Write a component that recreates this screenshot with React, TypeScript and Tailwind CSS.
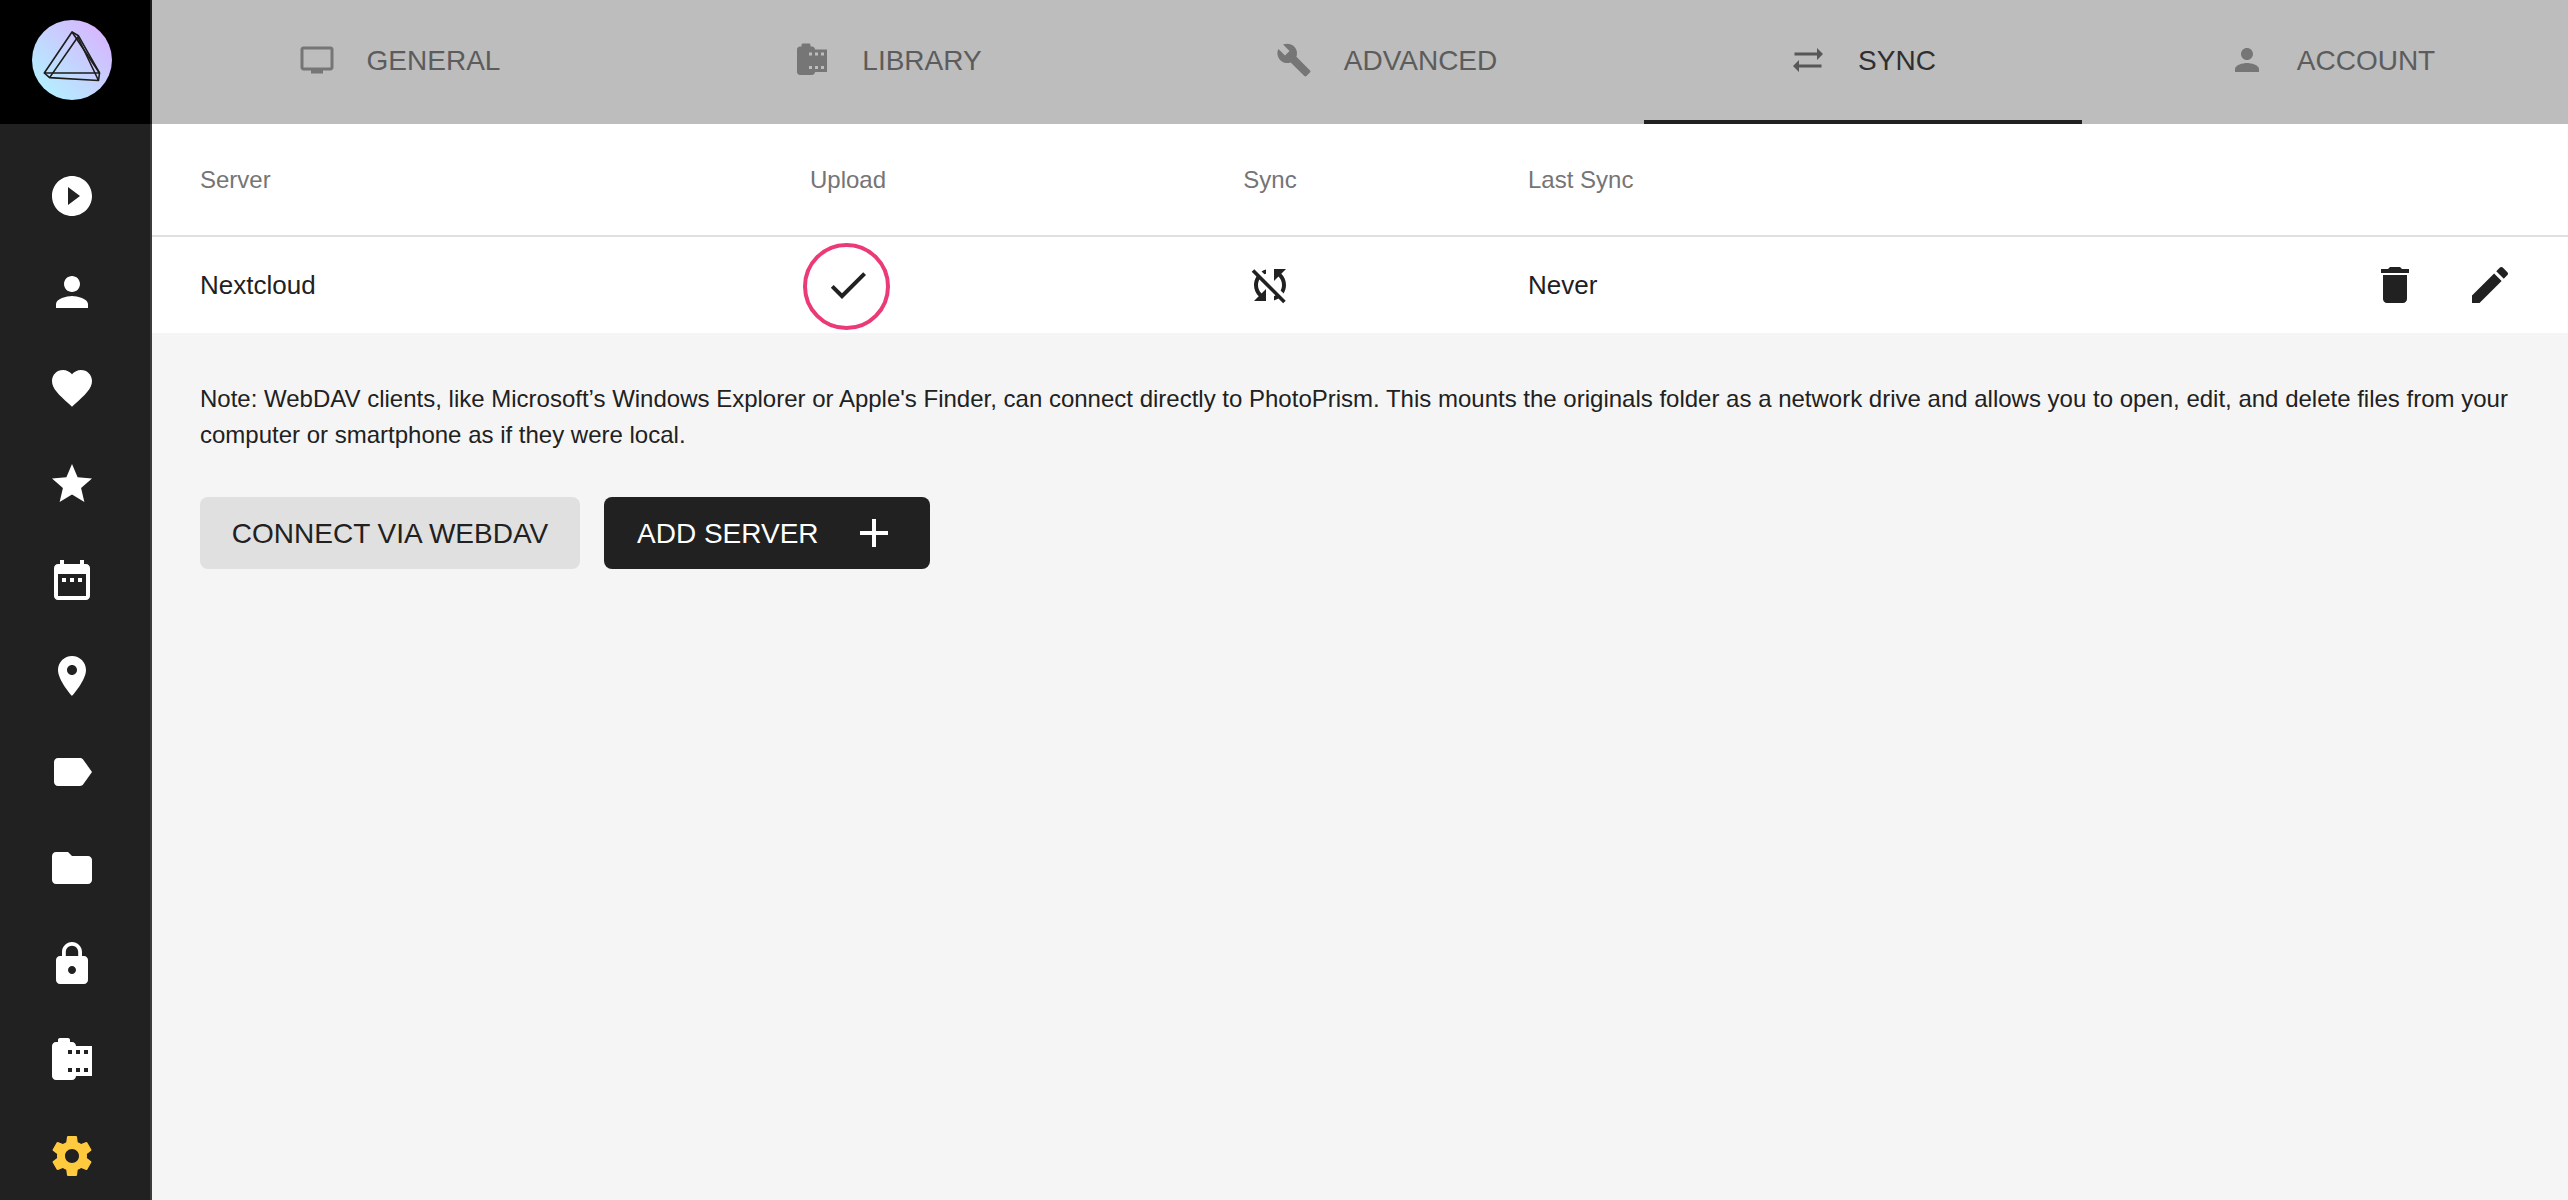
import type { ReactNode } from "react";

const paths = {
  play: "M12 2C6.48 2 2 6.48 2 12s4.48 10 10 10 10-4.48 10-10S17.52 2 12 2zm-2 14.5v-9l6 4.5-6 4.5z",
  person: "M12 12c2.21 0 4-1.79 4-4s-1.79-4-4-4-4 1.79-4 4 1.79 4 4 4zm0 2c-2.67 0-8 1.34-8 4v2h16v-2c0-2.66-5.33-4-8-4z",
  heart: "M12 21.35l-1.45-1.32C5.4 15.36 2 12.28 2 8.5 2 5.42 4.42 3 7.5 3c1.74 0 3.41.81 4.5 2.09C13.09 3.81 14.76 3 16.5 3 19.58 3 22 5.42 22 8.5c0 3.78-3.4 6.86-8.55 11.54L12 21.35z",
  star: "M12 17.27L18.18 21l-1.64-7.03L22 9.24l-7.19-.61L12 2 9.19 8.63 2 9.24l5.46 4.73L5.82 21z",
  calendar: "M9 11H7v2h2v-2zm4 0h-2v2h2v-2zm4 0h-2v2h2v-2zm2-7h-1V2h-2v2H8V2H6v2H5c-1.11 0-1.99.9-1.99 2L3 20c0 1.1.89 2 2 2h14c1.1 0 2-.9 2-2V6c0-1.1-.9-2-2-2zm0 16H5V9h14v11z",
  place: "M12 2C8.13 2 5 5.13 5 9c0 5.25 7 13 7 13s7-7.75 7-13c0-3.87-3.13-7-7-7zm0 9.5c-1.38 0-2.5-1.12-2.5-2.5s1.12-2.5 2.5-2.5 2.5 1.12 2.5 2.5-1.12 2.5-2.5 2.5z",
  label: "M17.63 5.84C17.27 5.33 16.67 5 16 5L5 5.01C3.9 5.01 3 5.9 3 7v10c0 1.1.9 1.99 2 1.99L16 19c.67 0 1.27-.33 1.63-.84L22 12l-4.37-6.16z",
  folder: "M10 4H4c-1.1 0-1.99.9-1.99 2L2 18c0 1.1.9 2 2 2h16c1.1 0 2-.9 2-2V8c0-1.1-.9-2-2-2h-8l-2-2z",
  lock: "M18 8h-1V6c0-2.76-2.24-5-5-5S7 3.24 7 6v2H6c-1.1 0-2 .9-2 2v10c0 1.1.9 2 2 2h12c1.1 0 2-.9 2-2V10c0-1.1-.9-2-2-2zm-6 9c-1.1 0-2-.9-2-2s.9-2 2-2 2 .9 2 2-.9 2-2 2zm3.1-9H8.9V6c0-1.71 1.39-3.1 3.1-3.1 1.71 0 3.1 1.39 3.1 3.1v2z",
  roll: "M14 5c0-1.1-.9-2-2-2h-1V2c0-.55-.45-1-1-1H6c-.55 0-1 .45-1 1v1H4c-1.1 0-2 .9-2 2v15c0 1.1.9 2 2 2h8c1.1 0 2-.9 2-2h8V5h-8zm-2 13h-2v-2h2v2zm0-9h-2V7h2v2zm4 9h-2v-2h2v2zm0-9h-2V7h2v2zm4 9h-2v-2h2v2zm0-9h-2V7h2v2z",
  gear: "M19.43 12.98c.04-.32.07-.64.07-.98s-.03-.66-.07-.98l2.11-1.65c.19-.15.24-.42.12-.64l-2-3.46c-.12-.22-.39-.3-.61-.22l-2.49 1c-.52-.4-1.08-.73-1.69-.98l-.38-2.65C14.46 2.18 14.25 2 14 2h-4c-.25 0-.46.18-.49.42l-.38 2.65c-.61.25-1.17.59-1.69.98l-2.49-1c-.23-.09-.49 0-.61.22l-2 3.46c-.13.22-.07.49.12.64l2.11 1.65c-.04.32-.07.65-.07.98s.03.66.07.98l-2.11 1.65c-.19.15-.24.42-.12.64l2 3.46c.12.22.39.3.61.22l2.49-1c.52.4 1.08.73 1.69.98l.38 2.65c.03.24.24.42.49.42h4c.25 0 .46-.18.49-.42l.38-2.65c.61-.25 1.17-.59 1.69-.98l2.49 1c.23.09.49 0 .61-.22l2-3.46c.12-.22.07-.49-.12-.64l-2.11-1.65zM12 15.5c-1.93 0-3.5-1.57-3.5-3.5s1.57-3.5 3.5-3.5 3.5 1.57 3.5 3.5-1.57 3.5-3.5 3.5z",
  screen: "M21 3H3c-1.11 0-2 .89-2 2v12c0 1.1.89 2 2 2h5v2h8v-2h5c1.1 0 1.99-.9 1.99-2L23 5c0-1.11-.9-2-2-2zm0 14H3V5h18v12z",
  wrench: "M22.7 19l-9.1-9.1c.9-2.3.4-5-1.5-6.9-2-2-5-2.4-7.4-1.3L9 6 6 9 1.6 4.7C.4 7.1.9 10.1 2.9 12.1c1.9 1.9 4.6 2.4 6.9 1.5l9.1 9.1c.4.4 1 .4 1.4 0l2.3-2.3c.5-.4.5-1.1.1-1.4z",
  swap: "M22 8l-4-4v3H3v2h15v3l4-4zM2 16l4 4v-3h15v-2H6v-3l-4 4z",
  check: "M9 16.17L4.83 12l-1.42 1.41L9 19 21 7l-1.41-1.41z",
  syncOff: "M10 6.35V4.26c-.8.21-1.55.54-2.23.96l1.46 1.46c.25-.12.5-.24.77-.33zm-7.14-.94l2.36 2.36C4.45 8.99 4 10.44 4 12c0 2.21.91 4.2 2.36 5.64L4 20h6v-6l-2.24 2.24C6.68 15.15 6 13.66 6 12c0-1 .25-1.94.68-2.77l8.08 8.08c-.25.13-.5.25-.77.34v2.09c.8-.21 1.55-.54 2.23-.96l2.36 2.36 1.27-1.27L4.14 4.14 2.86 5.41zM20 4h-6v6l2.24-2.24C17.32 8.85 18 10.34 18 12c0 1-.25 1.94-.68 2.77l1.46 1.46C19.55 15.01 20 13.56 20 12c0-2.21-.91-4.2-2.36-5.64L20 4z",
  trash: "M6 19c0 1.1.9 2 2 2h8c1.1 0 2-.9 2-2V7H6v12zM19 4h-3.5l-1-1h-5l-1 1H5v2h14V4z",
  pencil: "M3 17.25V21h3.75L17.81 9.94l-3.75-3.75L3 17.25zM20.71 7.04c.39-.39.39-1.02 0-1.41l-2.34-2.34c-.39-.39-1.02-.39-1.41 0l-1.83 1.83 3.75 3.75 1.83-1.83z",
  plus: "M19 13h-6v6h-2v-6H5v-2h6V5h2v6h6v2z",
};

type IconName = keyof typeof paths;

function Icon({ name, className = "size-12" }: { name: IconName; className?: string }) {
  return (
    <svg viewBox="0 0 24 24" fill="currentColor" className={`shrink-0 ${className}`} aria-hidden="true">
      <path d={paths[name]} />
    </svg>
  );
}

const nav: { icon: IconName; label: string }[] = [
  { icon: "play", label: "Search" },
  { icon: "person", label: "People" },
  { icon: "heart", label: "Favorites" },
  { icon: "star", label: "Moments" },
  { icon: "calendar", label: "Calendar" },
  { icon: "place", label: "Places" },
  { icon: "label", label: "Labels" },
  { icon: "folder", label: "Folders" },
  { icon: "lock", label: "Private" },
  { icon: "roll", label: "Library" },
  { icon: "gear", label: "Settings" },
];

const tabs: { icon: IconName; label: string; width: string }[] = [
  { icon: "screen", label: "GENERAL", width: "w-[495px]" },
  { icon: "roll", label: "LIBRARY", width: "w-[482px]" },
  { icon: "wrench", label: "ADVANCED", width: "w-[515px]" },
  { icon: "swap", label: "SYNC", width: "w-[438px]" },
  { icon: "person", label: "ACCOUNT", width: "w-[500px]" },
];

function Logo() {
  return (
    <svg viewBox="0 0 80 80" className="size-20">
      <defs>
        <linearGradient id="logo" x1="0.15" y1="0.85" x2="0.85" y2="0.15">
          <stop offset="0" stopColor="#b5edff" />
          <stop offset="1" stopColor="#d5b8fe" />
        </linearGradient>
      </defs>
      <circle cx="40" cy="40" r="40" fill="url(#logo)" />
      <g fill="none" stroke="#1d1d1b" strokeWidth="1.6" strokeLinejoin="round">
        <path d="M40 12L12.3 53H67.5Z" />
        <path d="M45.8 17L17.6 57.6L66.5 60.5Z" />
        <path d="M40 12L46.5 15.8L67.5 53M12.3 53L17.6 57.6M67.5 53L66.5 60.5" />
      </g>
    </svg>
  );
}

function TableRow({ children, className }: { children: ReactNode; className: string }) {
  return (
    <div className={`grid grid-cols-[484px_422px_422px_1fr_auto] items-center bg-white pr-[54px] ${className}`}>
      {children}
    </div>
  );
}

export default function App() {
  return (
    <div className="flex h-[1200px] w-[2568px] overflow-hidden bg-[#f5f5f5] font-['Liberation_Sans',Arial,sans-serif] text-[#212121]">
      <aside className="relative flex w-[152px] shrink-0 flex-col bg-[#212121] text-white">
        <div className="flex h-[124px] shrink-0 items-start justify-center bg-black pt-5 pr-2">
          <Logo />
        </div>
        <nav className="flex shrink-0 flex-col pt-6">
          {nav.map((n) => (
            <a
              key={n.label}
              aria-label={n.label}
              className={`flex h-24 shrink-0 items-center justify-center pr-2 ${n.icon === "gear" ? "text-[#ffca3e]" : ""}`}
            >
              <Icon name={n.icon} />
            </a>
          ))}
        </nav>
        <div className="absolute inset-y-0 right-0 w-0.5 bg-white/12" />
      </aside>

      <main className="flex min-w-0 flex-1 flex-col">
        <header className="flex h-[124px] shrink-0 overflow-hidden bg-[#bdbdbd] text-[28px]">
          {tabs.map((t) => {
            const active = t.label === "SYNC";
            return (
              <div
                key={t.label}
                className={`flex shrink-0 justify-center border-b-4 ${t.width} ${
                  active ? "border-[#212121] text-[#2f2f2f]" : "border-transparent text-[#5c5c5c]"
                }`}
              >
                <div className="flex h-[120px] items-center gap-8">
                  <Icon name={t.icon} className={active ? "size-9 text-[#575757]" : "size-9 text-[#767676]"} />
                  <span className="pt-0.5">{t.label}</span>
                </div>
              </div>
            );
          })}
        </header>

        <TableRow className="h-[113px] shrink-0 border-b-2 border-[#e0e0e0] text-2xl text-[#757575]">
          <span className="pl-12">Server</span>
          <span className="pl-0.5 text-center">Upload</span>
          <span className="pl-0.5 text-center">Sync</span>
          <span className="pl-12">Last Sync</span>
        </TableRow>
        <TableRow className="h-24 shrink-0 text-[26px]">
          <span className="pl-12">Nextcloud</span>
          <span className="relative flex justify-center pl-px">
            <Icon name="check" />
            <span className="absolute -top-[18px] left-[167px] size-[87px] rounded-full border-4 border-[#ea3a78]" />
          </span>
          <span className="flex justify-center pl-px">
            <Icon name="syncOff" />
          </span>
          <span className="pl-12">Never</span>
          <span className="flex gap-[47px]">
            <Icon name="trash" />
            <Icon name="pencil" />
          </span>
        </TableRow>

        <section className="px-12 pt-12">
          <p className="text-2xl leading-9">
            Note: WebDAV clients, like Microsoft’s Windows Explorer or Apple's Finder, can connect directly to
            PhotoPrism. This mounts the originals folder as a network drive and allows you to open, edit, and delete
            files from your
            <br />
            computer or smartphone as if they were local.
          </p>
          <div className="mt-11 flex gap-6 text-[28px]">
            <button className="flex h-18 w-[380px] items-center justify-center rounded-lg bg-[#e0e0e0] pt-0.5 whitespace-nowrap">
              CONNECT VIA WEBDAV
            </button>
            <button className="flex h-18 w-[326px] items-center justify-between rounded-lg bg-[#212121] pr-8 pl-[33px] whitespace-nowrap text-white">
              <span className="pt-0.5">ADD SERVER</span>
              <Icon name="plus" />
            </button>
          </div>
        </section>
      </main>
    </div>
  );
}
